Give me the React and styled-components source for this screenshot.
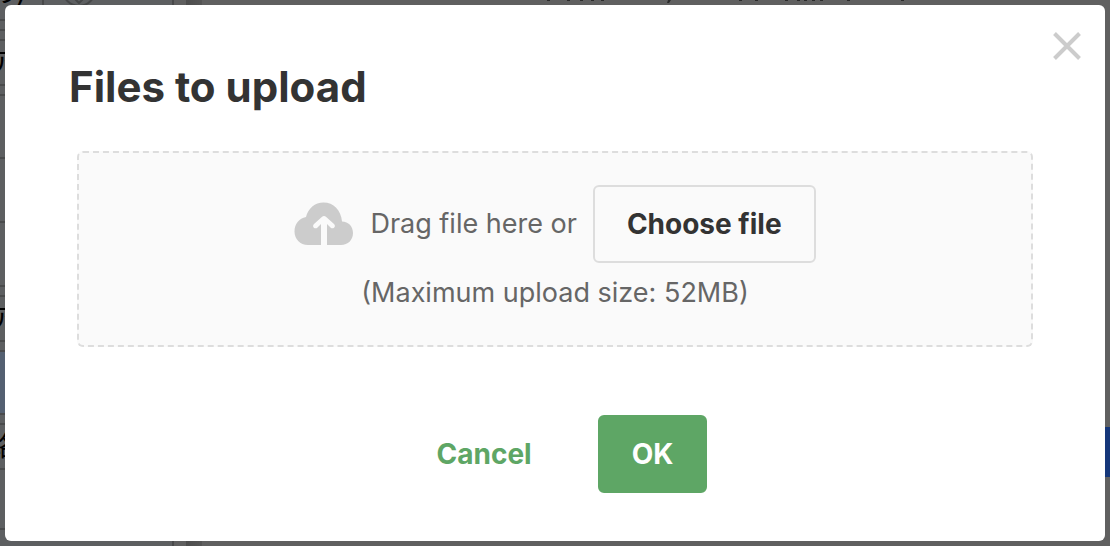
import React from 'react';
import styled, { createGlobalStyle } from 'styled-components';

const rows = [
    { height: 21, label: 'の)' },
    { height: 10 },
    { height: 10 },
    { height: 45, label: 'ア' },
    { height: 10 },
    { height: 63 },
    { height: 64 },
    { height: 64 },
    { height: 10 },
    { height: 45, label: 'ア' },
    { height: 10 },
    { height: 63, active: true },
    { height: 10 },
    { height: 45, label: '絡' },
    { height: 60 },
];

const textMarks = [547, 567, 580, 591, 601, 739, 755, 785, 797, 804, 812, 820, 847, 901];

export default function App() {
    return (
        <>
            <GlobalStyle />
            <Page aria-hidden='true'>
                <Sidebar>
                    {rows.map((row, i) => (
                        <Row key={i} $height={row.height} $active={row.active}>
                            {row.label && <RowLabel $wide={i === 0}>{row.label}</RowLabel>}
                            {i === 0 && (
                                <Chevron>
                                    <svg width='34' height='34' viewBox='0 0 34 34' fill='none' stroke='#464748' strokeWidth='2'>
                                        <circle cx='17' cy='17' r='16' />
                                        <path d='M11 24l6 6 6-6' />
                                    </svg>
                                </Chevron>
                            )}
                        </Row>
                    ))}
                </Sidebar>
                <Gutter />
                <Scrollbar />
                <Content>
                    <svg width='908' height='4' viewBox='202 0 908 4' fill='#2b2b2b'>
                        {textMarks.map((x) => <rect key={x} x={x} y='0' width='3' height='1' />)}
                        <path d='M668 0h3l-2 3h-2z' />
                    </svg>
                    <SideTab />
                </Content>
            </Page>
            <Overlay>
                <Modal role='dialog' aria-modal='true' aria-labelledby='upload-title'>
                    <CloseButton type='button' aria-label='Close'>
                        <svg width='28' height='28' viewBox='0 0 28 28' fill='none' stroke='#ccc' strokeWidth='4'>
                            <path d='M1.5 1.5l25 25M26.5 1.5l-25 25' />
                        </svg>
                    </CloseButton>
                    <Title id='upload-title'>Files to upload</Title>
                    <DropZone>
                        <DropRow>
                            <svg width='60' height='44' viewBox='0 0 60 44'>
                                <path fill='#ccc' d='M27 43H14C6 43 .5 37 .5 29.500 .5 22 5 16.500 12 15 14 6.500 21 .5 29.500 .5 39.500 .5 47 8 48 19.500 54.500 19.500 59 24.500 59 31 59 38 54 43 47 43H33V22l3.500 3.500c2.500 2.500 6-1 3.500-3.500l-7.800-7c-1.500-1.300-2.900-1.300-4.400 0L20 22c-2.500 2.500 1 6 3.500 3.500L27 22z' />
                            </svg>
                            <span>Drag file here or</span>
                            <Button type='button' $kind='outline'>Choose file</Button>
                        </DropRow>
                        <Hint>(Maximum upload size: 52MB)</Hint>
                    </DropZone>
                    <Actions>
                        <Button type='button' $kind='text'>Cancel</Button>
                        <Button type='button' $kind='primary'>OK</Button>
                    </Actions>
                </Modal>
            </Overlay>
        </>
    );
}

const GlobalStyle = createGlobalStyle`
    *{
        box-sizing: border-box;
    }
    body{
        margin: 0;
        background-color: #606060;
        font-family: Inter, "Noto Sans CJK JP", sans-serif;
        font-size: 27px;
        line-height: 40px;
    }
`

const Page = styled.div`
    display: flex;
    height: 100vh;
    overflow: hidden;
`

const Sidebar = styled.div`
    width: 174px;
    flex-shrink: 0;
    background-color: #5d5f61;
    border-right: 2px solid #48494a;
`

const Row = styled.div`
    display: flex;
    align-items: center;
    height: ${({ $height }) => $height}px;
    overflow: hidden;
    background-color: ${({ $active }) => ($active ? '#546071' : 'transparent')};
    border-bottom: 2px solid #4a4b4c;
`

const RowLabel = styled.span`
    display: flex;
    justify-content: flex-end;
    align-self: ${({ $wide }) => ($wide ? 'flex-end' : 'center')};
    flex-shrink: 0;
    width: ${({ $wide }) => ($wide ? 44 : 16)}px;
    padding: ${({ $wide }) => ($wide ? '0 16px 6px 0' : '0')};
    border-right: ${({ $wide }) => ($wide ? '2px solid #48494a' : 'none')};
    white-space: nowrap;
    color: #000;
`

const Chevron = styled.span`
    display: flex;
    align-self: flex-end;
    padding: 0 0 12px 18px;
`

const Gutter = styled.div`
    width: 12px;
    flex-shrink: 0;
    background-color: #5f5f5f;
`

const Scrollbar = styled.div`
    width: 16px;
    flex-shrink: 0;
    background: linear-gradient(to right, #4d4d4d, #555);
`

const Content = styled.div`
    display: flex;
    flex-direction: column;
    justify-content: space-between;
    align-items: flex-end;
    flex: 1;
    padding-bottom: 69px;
    background-color: #606060;
`

const SideTab = styled.div`
    width: 16px;
    height: 50px;
    background-color: #15377a;
`

const Overlay = styled.div`
    position: fixed;
    inset: 0;
    display: flex;
    padding: 5px;
`

const Modal = styled.div`
    position: relative;
    flex: 1;
    padding: 50px 72px 48px;
    background-color: #fff;
    border-radius: 6px;
`

const CloseButton = styled.button`
    position: absolute;
    top: 27px;
    right: 24px;
    display: flex;
    padding: 0;
    border: none;
    background: none;
    cursor: pointer;
`

const Title = styled.h1`
    margin: 0 -8px 32px;
    font-size: 42px;
    font-weight: 700;
    line-height: 64px;
    color: #333;
`

const DropZone = styled.div`
    display: flex;
    flex-direction: column;
    align-items: center;
    padding: 32px;
    border: 2px dashed #ddd;
    border-radius: 6px;
    background-color: #fafafa;
    color: #666;
`

const DropRow = styled.div`
    display: flex;
    align-items: center;
    gap: 16px;
`

const Hint = styled.p`
    margin: 10px 0 0;
`

const Actions = styled.div`
    display: flex;
    justify-content: center;
    gap: 32px;
    margin-top: 68px;
`

const kinds = {
    outline: { color: '#333', background: 'transparent', border: '#ddd' },
    text: { color: '#5ea665', background: 'transparent', border: 'transparent' },
    primary: { color: '#fff', background: '#5ea665', border: '#5ea665' },
};

const Button = styled.button`
    height: 78px;
    padding: 0 32px;
    border: 2px solid ${({ $kind }) => kinds[$kind].border};
    border-radius: 6px;
    background-color: ${({ $kind }) => kinds[$kind].background};
    color: ${({ $kind }) => kinds[$kind].color};
    font-family: inherit;
    font-size: 28px;
    font-weight: 700;
    cursor: pointer;
`
